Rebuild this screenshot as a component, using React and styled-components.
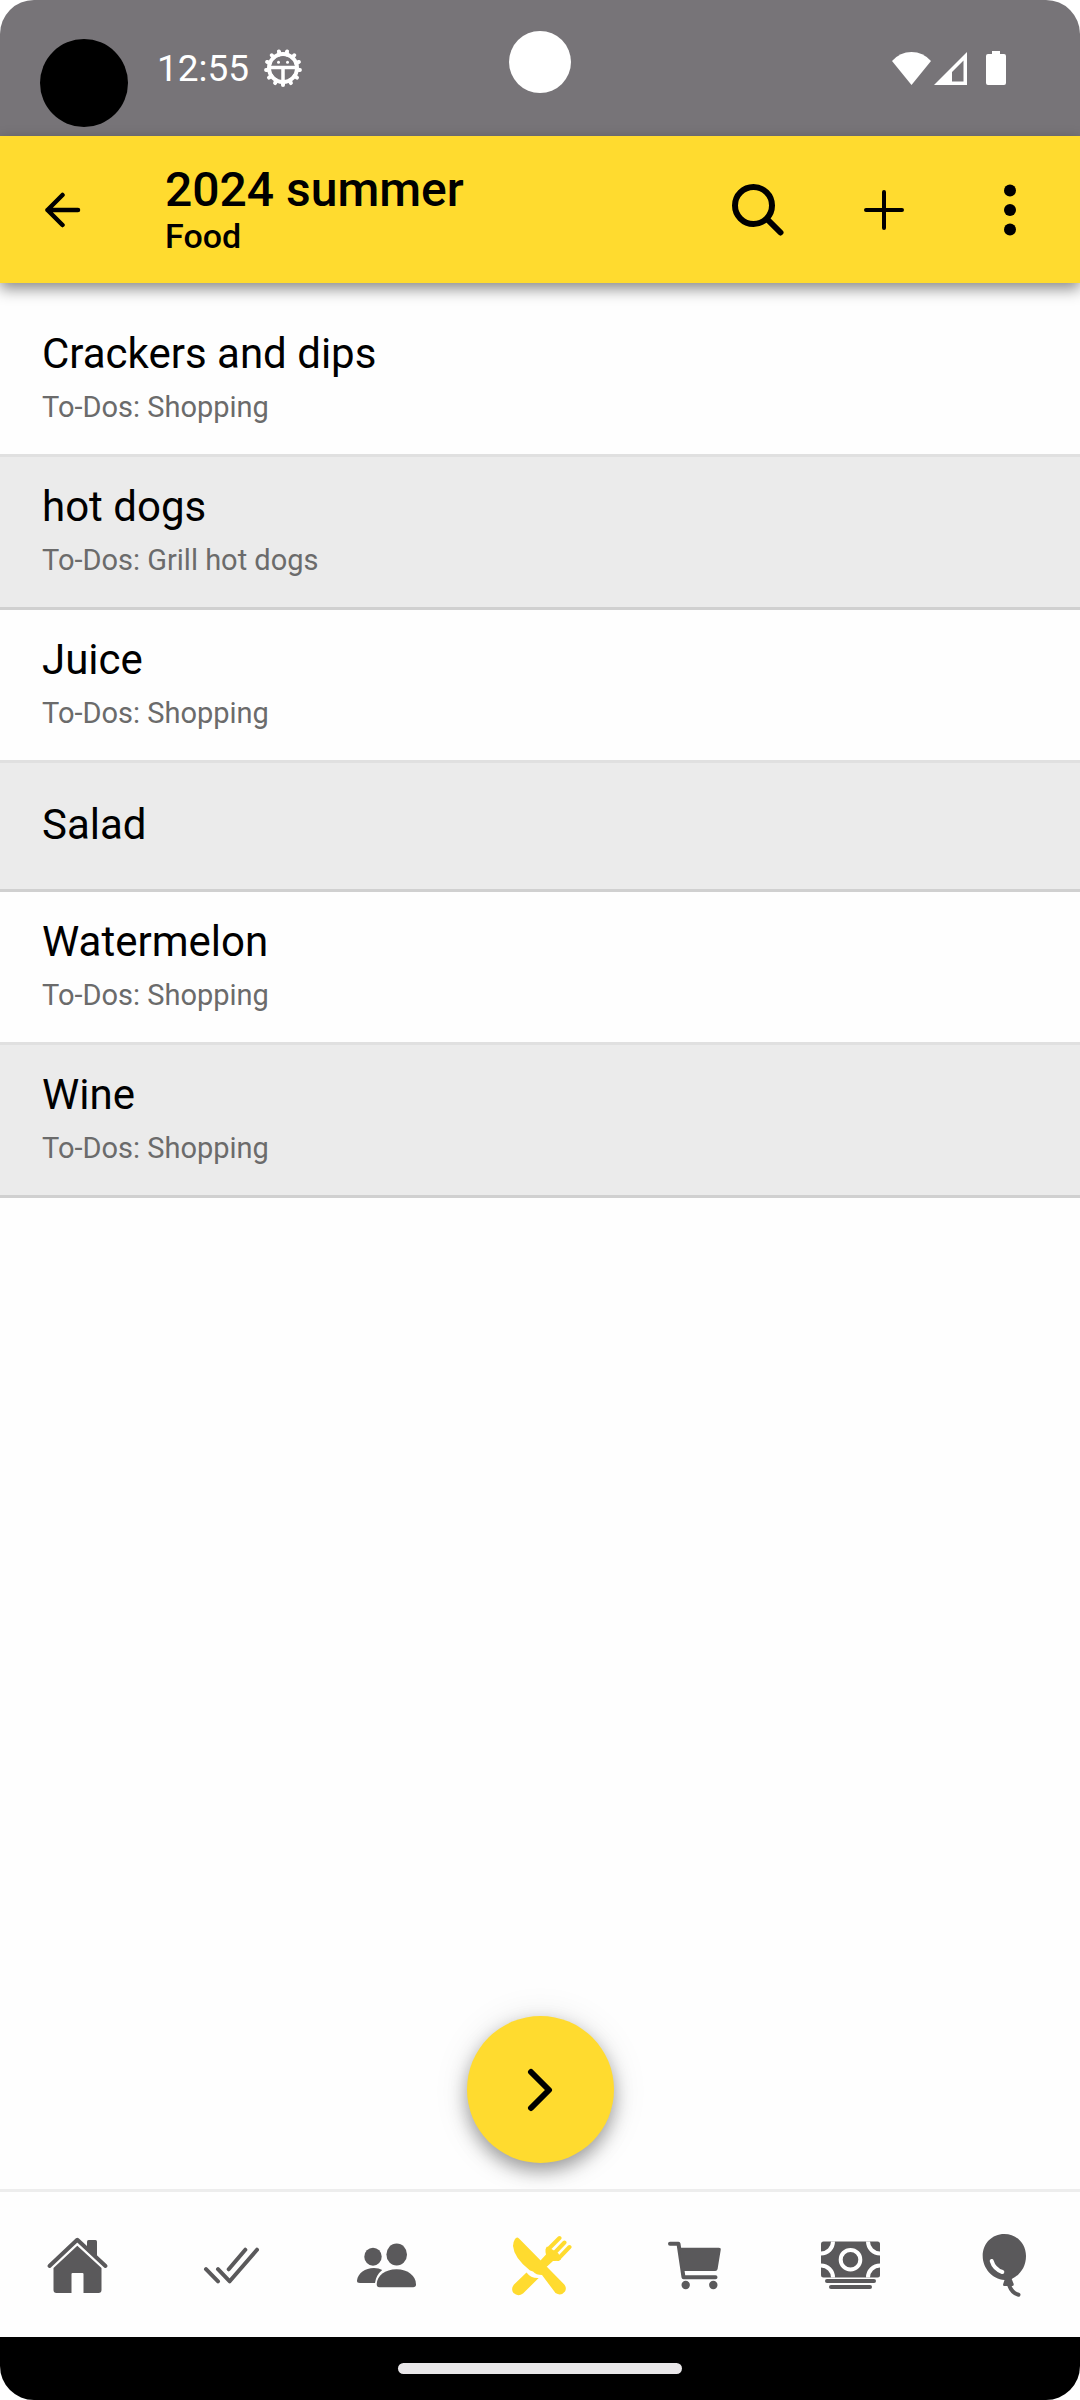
import React from 'react';

import styled, { createGlobalStyle } from 'styled-components';

const items = [
  { name: 'Crackers and dips', todo: 'Shopping' },
  { name: 'hot dogs', todo: 'Grill hot dogs' },
  { name: 'Juice', todo: 'Shopping' },
  { name: 'Salad' },
  { name: 'Watermelon', todo: 'Shopping' },
  { name: 'Wine', todo: 'Shopping' },
];

const teeth = Array.from({ length: 13 }, (_, i) => 180 + (i * 360) / 13);

function DebugIcon() {
  return (
    <svg width="38" height="38" viewBox="0 0 38 38" fill="none" stroke="#fff">
      <circle cx="19" cy="19" r="14" strokeWidth="4" />
      {teeth.map((angle) => (
        <path key={angle} d="M19 5V2" strokeWidth="4" strokeLinecap="round" transform={`rotate(${angle} 19 19)`} />
      ))}
      <path d="M6 18.5h26M19 18.5v14" strokeWidth="3.500" />
      <circle cx="14.500" cy="13.300" r="1.500" fill="#fff" stroke="none" />
      <circle cx="23.500" cy="13.300" r="1.500" fill="#fff" stroke="none" />
    </svg>
  );
}

function WifiIcon() {
  return (
    <svg width="39" height="33" viewBox="0 0 39 33" fill="#fff">
      <path d="M0 9Q8 0 19.500 0T39 9L19.500 33Z" />
    </svg>
  );
}

function SignalIcon() {
  return (
    <svg width="33" height="33" viewBox="0 0 33 33" fill="#fff">
      <path fillRule="evenodd" d="M33 0V33H0ZM29.500 8.500L18 20V29.500H29.500Z" />
    </svg>
  );
}

function BatteryIcon() {
  return (
    <svg width="20" height="34" viewBox="0 0 20 34" fill="#fff">
      <path d="M6 0h8v3h4a2 2 0 0 1 2 2v27a2 2 0 0 1-2 2H2a2 2 0 0 1-2-2V5a2 2 0 0 1 2-2h4Z" />
    </svg>
  );
}

function BackIcon() {
  return (
    <svg width="36" height="36" viewBox="0 0 36 36" fill="none" stroke="#000" strokeWidth="4.500" strokeLinecap="round" strokeLinejoin="round">
      <path d="M33 18H2.500M17.500 3L2.500 18l15 15" />
    </svg>
  );
}

function SearchIcon() {
  return (
    <svg width="52" height="52" viewBox="0 0 52 52" fill="none" stroke="#000" strokeWidth="6" strokeLinecap="round">
      <circle cx="21.500" cy="21.500" r="18.500" />
      <path d="M35.500 35.500L48.500 48.500" />
    </svg>
  );
}

function PlusIcon() {
  return (
    <svg width="40" height="40" viewBox="0 0 40 40" fill="none" stroke="#000" strokeWidth="4" strokeLinecap="round">
      <path d="M20 2v36M2 20h36" />
    </svg>
  );
}

function MoreIcon() {
  return (
    <svg width="12" height="52" viewBox="0 0 12 52">
      <circle cx="6" cy="6.500" r="6" />
      <circle cx="6" cy="26" r="6" />
      <circle cx="6" cy="45.500" r="6" />
    </svg>
  );
}

function ChevronIcon() {
  return (
    <svg width="26" height="44" viewBox="0 0 26 44" fill="none" stroke="#000" strokeWidth="6" strokeLinecap="round" strokeLinejoin="round">
      <path d="M4 4l18 18L4 40" />
    </svg>
  );
}

function HomeIcon() {
  return (
    <NavSvg viewBox="0 0 64 64">
      <path d="M4.500 33L32.300 6.800L60.500 33" fill="none" stroke="currentColor" strokeWidth="4" strokeLinecap="round" strokeLinejoin="round" />
      <path d="M42 8.500a1.500 1.500 0 0 1 1.500-1.500h7a1.500 1.500 0 0 1 1.500 1.500V26L42 16Z" />
      <path d="M32.300 12.700L56.500 35V57a3 3 0 0 1-3 3H38.500V41a1 1 0 0 0-1-1h-10a1 1 0 0 0-1 1V60H11.500a3 3 0 0 1-3-3V35Z" />
    </NavSvg>
  );
}

function ChecksIcon() {
  return (
    <NavSvg viewBox="0 0 64 64">
      <path
        d="M7 36.200L19 48.300M19 36.200L30.700 48.300L58 16.700M29.700 36.300L46.300 16.700"
        fill="none"
        stroke="currentColor"
        strokeWidth="4"
        strokeLinecap="round"
        strokeLinejoin="round"
      />
    </NavSvg>
  );
}

function PeopleIcon() {
  return (
    <NavSvg viewBox="0 0 64 64">
      <ellipse cx="19" cy="23.700" rx="8.700" ry="9" />
      <ellipse cx="42.700" cy="21.500" rx="10.300" ry="11" />
      <path d="M22.700 51C23 43 31 36.300 42.500 36.300S62 43 62 51.500Q62 54.300 59 54.300H25.500Q22.700 54.300 22.700 51Z" />
      <path d="M3 47.500C4 40 11 35 20 35Q25 35 28.200 37Q22 42 21 50H6Q2.700 50 3 47.500Z" />
    </NavSvg>
  );
}

function CutleryIcon() {
  return (
    <NavSvg viewBox="0 0 64 64">
      <path d="M7 6Q8.800 3.200 11 5.500L56.300 51.500Q59 55 57 58.500Q53 63.500 47.500 60L34 42Q28 42 25 38.500L22 37.500Q6 25 5 13Q5 9 7 6Z" />
      <path d="M18.500 39.500L6 51.500Q2.500 56 5.500 60Q10 64 15 60.500L30.700 45Q23 45.500 18.500 39.500Z" />
      <path d="M32 28L38 21.500Q36.500 16 39 13.500L46 17.500L50.500 20.500L53 26.500Q50 28.500 45 28L38.500 34Z" />
      <path d="M51.500 5L40 16.500M56.500 9.500L44.500 22M61.500 14L50 26" fill="none" stroke="currentColor" strokeWidth="4" strokeLinecap="round" />
    </NavSvg>
  );
}

function CartIcon() {
  return (
    <NavSvg viewBox="0 0 64 64">
      <path d="M8 10.700H16.500L21.500 44.300H53.500" fill="none" stroke="currentColor" strokeWidth="4" strokeLinecap="round" strokeLinejoin="round" />
      <path d="M18 14.700H56.700a2 2 0 0 1 2 2.400L55.600 36a2.500 2.500 0 0 1-2.500 2H20Z" />
      <circle cx="23.700" cy="52" r="4.200" />
      <circle cx="51.300" cy="52" r="4.200" />
    </NavSvg>
  );
}

function MoneyIcon() {
  return (
    <NavSvg viewBox="0 0 64 64">
      <clipPath id="bill">
        <rect x="4" y="8.500" width="59" height="36" rx="2.500" />
      </clipPath>
      <rect x="4" y="8.500" width="59" height="36" rx="2.500" />
      <g clipPath="url(#bill)" fill="none" stroke="#fff" strokeWidth="4">
        <circle cx="33.500" cy="26.700" r="9.800" />
        <circle cx="4" cy="8.500" r="12" />
        <circle cx="63" cy="8.500" r="12" />
        <circle cx="4" cy="44.500" r="12" />
        <circle cx="63" cy="44.500" r="12" />
      </g>
      <rect x="8" y="46" width="51" height="4" rx="2" />
      <rect x="12" y="52" width="43" height="4" rx="2" />
    </NavSvg>
  );
}

function BalloonIcon() {
  return (
    <NavSvg viewBox="0 0 64 64">
      <path d="M33.300 1C45.500 1 55 10.500 55 23C55 34 49 42 40.700 46L42.700 51Q43 53 41 53H34Q31.500 53.500 32.200 51L33.500 47C21 46 11.700 35 11.700 23C11.700 10.500 21 1 33.300 1Z" />
      <path d="M38.500 53Q41 60 47.500 61.800" fill="none" stroke="currentColor" strokeWidth="4" strokeLinecap="round" />
      <path d="M20.700 28Q23 36 31.300 39" fill="none" stroke="#fff" strokeWidth="4" strokeLinecap="round" />
    </NavSvg>
  );
}

const tabs = [
  { label: 'Home', Icon: HomeIcon },
  { label: 'To-Dos', Icon: ChecksIcon },
  { label: 'Guests', Icon: PeopleIcon },
  { label: 'Food', Icon: CutleryIcon, active: true },
  { label: 'Shopping', Icon: CartIcon },
  { label: 'Budget', Icon: MoneyIcon },
  { label: 'Party', Icon: BalloonIcon },
];

export default function App() {
  return (
    <Screen>
      <GlobalStyle />
      <StatusBar>
        <TouchDot />
        <Camera />
        <Time>12:55</Time>
        <DebugIcon />
        <StatusIcons>
          <WifiIcon />
          <SignalIcon />
          <BatteryWrapper>
            <BatteryIcon />
          </BatteryWrapper>
        </StatusIcons>
      </StatusBar>

      <AppBar>
        <IconButton aria-label="Back">
          <BackIcon />
        </IconButton>
        <Heading>
          <Title>2024 summer</Title>
          <Subtitle>Food</Subtitle>
        </Heading>
        <IconButton aria-label="Search">
          <SearchIcon />
        </IconButton>
        <IconButton aria-label="Add">
          <PlusIcon />
        </IconButton>
        <IconButton aria-label="More options">
          <MoreIcon />
        </IconButton>
      </AppBar>

      <Main>
        <List>
          {items.map((item) => (
            <Row key={item.name}>
              <RowButton $single={!item.todo}>
                <RowTitle>{item.name}</RowTitle>
                {item.todo && <RowNote>To-Dos: {item.todo}</RowNote>}
              </RowButton>
            </Row>
          ))}
        </List>
        <NextButton aria-label="Next">
          <ChevronIcon />
        </NextButton>
      </Main>

      <NavBar>
        {tabs.map(({ label, Icon, active }) => (
          <NavButton key={label} aria-label={label} $active={active}>
            <Icon />
          </NavButton>
        ))}
      </NavBar>
      <GestureBar>
        <GestureHandle />
      </GestureBar>
    </Screen>
  );
}

const GlobalStyle = createGlobalStyle`
  * {
    box-sizing: border-box;
  }

  body {
    margin: 0;
    background-color: #fff;
    font-family: Roboto, sans-serif;
  }

  button {
    margin: 0;
    padding: 0;
    border: 0;
    background: none;
    font-family: inherit;
    color: #000;
    cursor: pointer;
  }

  svg {
    display: block;
    flex-shrink: 0;
  }
`;

const Screen = styled.div`
  display: flex;
  flex-direction: column;
  min-height: 100vh;
  border-radius: 34px;
  overflow: hidden;
  background-color: #fefefe;
`;

const StatusBar = styled.div`
  position: relative;
  display: flex;
  align-items: center;
  height: 136px;
  padding: 0 74px 0 157px;
  background-color: #777478;
`;

const TouchDot = styled.span`
  position: absolute;
  top: 39px;
  left: 40px;
  width: 88px;
  height: 88px;
  border-radius: 50%;
  background-color: #000;
`;

const Camera = styled.span`
  position: absolute;
  top: 31px;
  left: 50%;
  width: 62px;
  height: 62px;
  margin-left: -31px;
  border-radius: 50%;
  background-color: #fff;
`;

const Time = styled.span`
  margin-right: 15px;
  padding-top: 2px;
  font-size: 37px;
  line-height: 42px;
  color: #fff;
`;

const StatusIcons = styled.div`
  display: flex;
  align-items: center;
  gap: 3px;
  margin-left: auto;
`;

const BatteryWrapper = styled.span`
  margin-left: 16px;
`;

const AppBar = styled.header`
  position: relative;
  z-index: 1;
  display: flex;
  align-items: center;
  height: 147px;
  background-color: #ffdb2f;
  box-shadow: 0 6px 14px rgba(0, 0, 0, 0.45);
`;

const IconButton = styled.button`
  display: flex;
  align-items: center;
  justify-content: center;
  width: 126px;
  height: 126px;

  &:last-child {
    margin-right: 7px;
  }
`;

const Heading = styled.div`
  flex: 1;
  padding-left: 39px;
`;

const Title = styled.h1`
  margin: 0;
  font-size: 48px;
  line-height: 52px;
  font-weight: 500;
`;

const Subtitle = styled.p`
  margin: 0;
  font-size: 34px;
  line-height: 40px;
  font-weight: 500;
`;

const Main = styled.main`
  display: flex;
  flex: 1;
  flex-direction: column;
  padding: 21px 0 26px;
`;

const List = styled.ul`
  margin: 0;
  padding: 0;
  list-style: none;
`;

const Row = styled.li`
  border-bottom: 3px solid #e0e0e0;

  &:nth-child(even) {
    border-color: #d0d0d0;
    background-color: #ebebeb;
  }
`;

const RowButton = styled.button`
  display: flex;
  flex-direction: column;
  gap: 10px;
  width: 100%;
  padding: ${(props) => (props.$single ? '37px 42px 39px' : '25px 42px 29px')};
  text-align: left;
`;

const RowTitle = styled.span`
  font-size: 42px;
  line-height: 50px;
`;

const RowNote = styled.span`
  font-size: 29px;
  line-height: 36px;
  color: #6b6b6b;
`;

const NextButton = styled.button`
  display: flex;
  align-items: center;
  justify-content: center;
  align-self: center;
  width: 147px;
  height: 147px;
  margin-top: auto;
  border-radius: 50%;
  background-color: #ffdb2f;
  box-shadow: 0 8px 18px rgba(0, 0, 0, 0.35), 0 2px 36px rgba(0, 0, 0, 0.1);
`;

const NavBar = styled.nav`
  display: grid;
  grid-template-columns: repeat(7, 1fr);
  height: 148px;
  border-top: 3px solid #ededed;
  background-color: #fefefe;
`;

const NavButton = styled.button`
  display: flex;
  align-items: center;
  justify-content: center;
  color: ${(props) => (props.$active ? '#ffdb2f' : '#5a595b')};
`;

const NavSvg = styled.svg`
  width: 64px;
  height: 64px;
  fill: currentColor;
`;

const GestureBar = styled.div`
  display: flex;
  align-items: center;
  justify-content: center;
  height: 63px;
  background-color: #000;
`;

const GestureHandle = styled.span`
  width: 284px;
  height: 11px;
  border-radius: 6px;
  background-color: #e9e7e9;
`;
